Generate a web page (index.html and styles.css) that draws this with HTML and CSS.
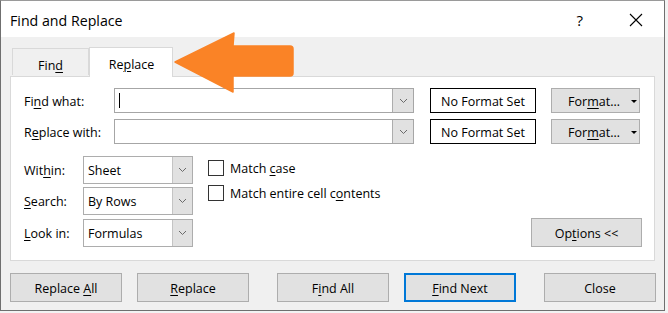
FILE: index.html
```html
<!DOCTYPE html>
<html>
<head>
<meta charset="utf-8">
<link rel="stylesheet" href="styles.css">
</head>
<body>
<div class="dialog">
  <div class="titlebar">
    <span class="title">Find and Replace</span>
    <span class="help">?</span>
    <svg class="close-x" width="14" height="14" viewBox="0 0 14 14"><path d="M1 1 L13 13 M13 1 L1 13" stroke="#000" stroke-width="1.1" fill="none"/></svg>
  </div>
  <div class="content">
    <div class="tabs">
      <div class="tab"><span>Fin<u>d</u></span></div>
      <div class="tab active"><span>Re<u>p</u>lace</span></div>
    </div>
    <div class="panel">
      <div class="row">
        <label class="lbl">Fi<u>n</u>d what:</label>
        <div class="field">
          <div class="field-text"><span class="caret"></span></div>
          <div class="drop"><svg width="9" height="6" viewBox="0 0 9 6"><path d="M1 1 L4.5 4.5 L8 1" stroke="#6a6a6a" fill="none"/></svg></div>
        </div>
        <div class="nfs"><span>No Format Set</span></div>
        <div class="btn fmt"><span>For<u>m</u>at…</span><span class="tri"></span></div>
      </div>
      <div class="row row2">
        <label class="lbl">R<u>e</u>place with:</label>
        <div class="field">
          <div class="field-text"></div>
          <div class="drop"><svg width="9" height="6" viewBox="0 0 9 6"><path d="M1 1 L4.5 4.5 L8 1" stroke="#6a6a6a" fill="none"/></svg></div>
        </div>
        <div class="nfs"><span>No Format Set</span></div>
        <div class="btn fmt"><span>For<u>m</u>at…</span><span class="tri"></span></div>
      </div>
      <div class="lower">
        <div class="combos">
          <div class="crow">
            <label class="clbl">Wit<u>h</u>in:</label>
            <div class="combo"><div class="combo-text"><span>Sheet</span></div><div class="cdrop"><svg width="9" height="6" viewBox="0 0 9 6"><path d="M1 1 L4.5 4.5 L8 1" stroke="#6a6a6a" fill="none"/></svg></div></div>
          </div>
          <div class="crow c2">
            <label class="clbl"><u>S</u>earch:</label>
            <div class="combo"><div class="combo-text"><span>By Rows</span></div><div class="cdrop"><svg width="9" height="6" viewBox="0 0 9 6"><path d="M1 1 L4.5 4.5 L8 1" stroke="#6a6a6a" fill="none"/></svg></div></div>
          </div>
          <div class="crow c3">
            <label class="clbl"><u>L</u>ook in:</label>
            <div class="combo"><div class="combo-text"><span>Formulas</span></div><div class="cdrop"><svg width="9" height="6" viewBox="0 0 9 6"><path d="M1 1 L4.5 4.5 L8 1" stroke="#6a6a6a" fill="none"/></svg></div></div>
          </div>
        </div>
        <div class="checks">
          <div class="check"><span class="box"></span><span>Match <u>c</u>ase</span></div>
          <div class="check ch2"><span class="box"></span><span>Match entire cell c<u>o</u>ntents</span></div>
        </div>
        <div class="opts">
          <div class="btn options"><span>Op<u>t</u>ions &lt;&lt;</span></div>
        </div>
      </div>
    </div>
    <div class="buttons">
      <div class="btn big"><span>Replace <u>A</u>ll</span></div>
      <div class="btn big"><span><u>R</u>eplace</span></div>
      <div class="btn big gap-l"><span>F<u>i</u>nd All</span></div>
      <div class="btn big default"><span><u>F</u>ind Next</span></div>
      <div class="btn big gap-l"><span>Close</span></div>
    </div>
  </div>
</div>
<svg class="arrow" width="668" height="313" viewBox="0 0 668 313">
  <path d="M175 62 L234 33 L233 46 L290 46 Q293 46 293 49 L293 73 Q293 76 290 76 L233 76 L233 92 Z" fill="#fa8326" stroke="#fa8326" stroke-width="1.5" stroke-linejoin="round"/>
</svg>
</body>
</html>
```
FILE: styles.css
```css
* { box-sizing: border-box; }
html, body { margin: 0; padding: 0; }
body {
  width: 668px;
  height: 313px;
  background: #f3f3f3;
  font-family: "Open Sans", "Noto Sans", sans-serif;
  font-size: 12.5px;
  color: #000;
  position: relative;
  overflow: hidden;
}
u { text-decoration: underline; text-underline-offset: 2px; text-decoration-thickness: 1px; }

.dialog {
  width: 665px;
  height: 311px;
  border: 1px solid #6f6f6f;
  border-top-color: #9a9a9a;
  background: #f0f0f0;
  display: flex;
  flex-direction: column;
}
.titlebar {
  height: 36px;
  background: #fff;
  display: flex;
  align-items: center;
  flex: none;
}
.title {
  font-size: 14.2px;
  margin-left: 9px;
  margin-top: 2px;
}
.help {
  font-size: 15px;
  margin-left: auto;
  margin-top: 1px;
}
.close-x {
  margin-left: 46px;
  margin-right: 21px;
  margin-top: 2px;
}
.content {
  flex: 1;
  display: flex;
  flex-direction: column;
}
.tabs {
  display: flex;
  align-items: flex-end;
  padding-left: 11px;
  margin-top: 10px;
  height: 29px;
}
.tab {
  width: 77px;
  height: 27px;
  border: 1px solid #d9d9d9;
  border-bottom: none;
  background: #f0f0f0;
  display: flex;
  justify-content: center;
  align-items: center;
  padding-top: 6px;
  margin-bottom: 1px;
}
.tab.active {
  width: 84px;
  height: 30px;
  background: #fff;
  margin-bottom: -1px;
  position: relative;
  z-index: 1;
  padding-top: 3px;
  padding-left: 1px;
}
.panel {
  margin-left: 9px;
  width: 645px;
  height: 185px;
  background: #fff;
  border: 1px solid #d9d9d9;
  padding: 11px 0 0 13px;
  flex: none;
}
.row {
  display: flex;
  align-items: center;
  height: 25px;
}
.row2 { margin-top: 6px; }
.lbl { width: 90px; padding-top: 1px; }
.field {
  width: 300px;
  height: 25px;
  border: 1px solid #a6a6a6;
  display: flex;
}
.field-text { flex: 1; display: flex; align-items: center; padding-left: 4px; }
.caret { width: 1px; height: 15px; background: #000; }
.drop {
  width: 21px;
  height: 23px;
  background: #e1e1e1;
  border-left: 1px solid #adadad;
  display: flex;
  align-items: center;
  justify-content: center;
}
.nfs {
  margin-left: 16px;
  width: 106px;
  height: 25px;
  border: 1px solid #000;
  display: flex;
  align-items: center;
  justify-content: center;
  padding-top: 1px;
}
.btn {
  background: #e1e1e1;
  border: 1px solid #adadad;
  display: flex;
  align-items: center;
  justify-content: center;
}
.fmt {
  margin-left: 15px;
  width: 89px;
  height: 25px;
  padding-left: 14px;
  padding-top: 1px;
}
.tri {
  width: 0; height: 0;
  border-left: 3px solid transparent;
  border-right: 3px solid transparent;
  border-top: 3px solid #000;
  margin-left: 11px;
}
.lower {
  display: flex;
  margin-top: 12px;
}
.crow { display: flex; align-items: center; height: 28px; }
.c2 { margin-top: 3px; }
.c3 { margin-top: 4px; }
.clbl { width: 59px; padding-top: 1px; }
.combo {
  width: 110px;
  height: 28px;
  border: 1px solid #adadad;
  display: flex;
}
.combo-text { flex: 1; display: flex; align-items: center; padding-left: 4px; padding-top: 1px; }
.cdrop {
  width: 20px;
  background: #e1e1e1;
  border-left: 1px solid #c4c4c4;
  display: flex;
  align-items: center;
  justify-content: center;
}
.checks { margin-left: 15px; padding-top: 4px; }
.check { display: flex; align-items: center; height: 16px; }
.ch2 { margin-top: 9px; }
.box {
  width: 16px; height: 16px;
  border: 1px solid #333;
  background: #fff;
  margin-right: 6px;
}
.opts {
  flex: 1;
  display: flex;
  align-items: flex-end;
  justify-content: flex-end;
  padding-right: 12px;
}
.options { width: 111px; height: 29px; padding-top: 1px; }
.buttons {
  display: flex;
  margin-top: 12px;
  padding-left: 9px;
}
.big { width: 112px; height: 29px; margin-left: 15px; padding-top: 1px; }
.big:first-child { margin-left: 0; }
.gap-l { margin-left: 28px; }
.default { border: 2px solid #0078d7; }
.arrow { position: absolute; left: 0; top: 0; pointer-events: none; }
```
